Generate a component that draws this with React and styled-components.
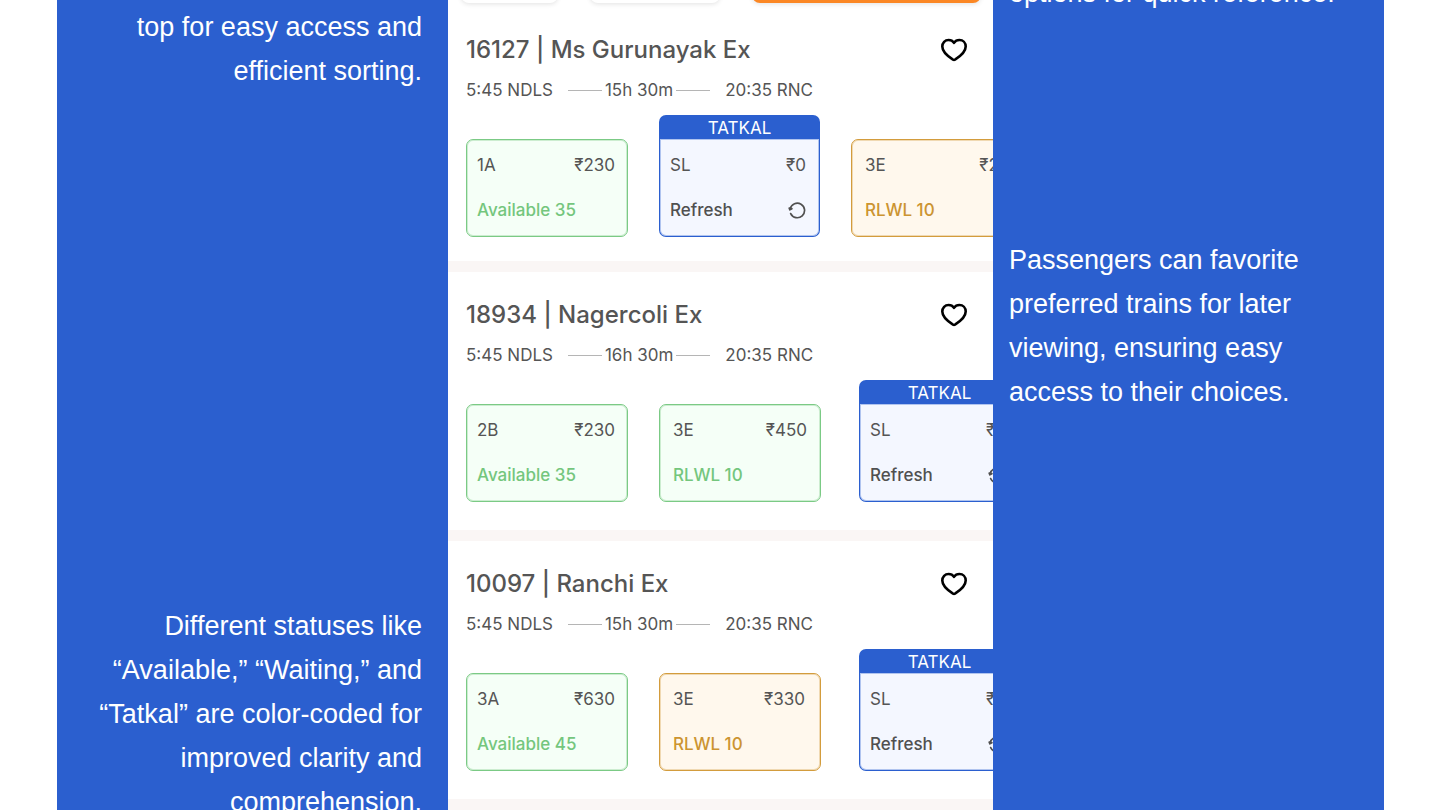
import React from 'react'
import styled, { createGlobalStyle } from 'styled-components'

const GlobalStyle = createGlobalStyle`
    * {
        box-sizing: border-box;
    }

    body {
        margin: 0;
        background-color: #fff;
        overflow: hidden;
    }
`

const Page = styled.main`
    display: grid;
    grid-template-columns: minmax(0, 391fr) minmax(0, 545fr) minmax(0, 391fr);
    height: 100vh;
    padding: 0 56px 0 57px;
    overflow: hidden;
`

const Notes = styled.aside`
    display: flex;
    flex-direction: column;
    gap: ${({ $gap }) => $gap}px;
    min-height: 0;
    padding: ${({ $right }) => ($right ? '0 16px' : '5px 26px 0')};
    background-color: #2b5fcf;
    color: #fff;
    font-family: 'Liberation Sans', Arial, sans-serif;
    font-size: 27px;
    line-height: 44px;
    text-align: ${({ $right }) => ($right ? 'left' : 'right')};
    white-space: nowrap;
`

const Note = styled.p`
    margin: ${({ $cut }) => ($cut ? '-29px 0 0' : '0')};
`

const Screen = styled.section`
    min-width: 0;
    overflow: hidden;
    background-color: #fff;
    color: #555;
    font-family: Inter, sans-serif;
    font-size: 17px;
    line-height: 20px;
`

const Filters = styled.div`
    display: flex;
    gap: 32px;
    margin-top: -41px;
    padding: 0 13px 4px;
`

const Filter = styled.button`
    flex: none;
    width: ${({ $width }) => $width}px;
    height: 44px;
    border: 0;
    border-radius: 8px;
    background-color: ${({ $active }) => ($active ? '#fb8724' : '#fff')};
    box-shadow: 0 1px 5px rgba(0, 0, 0, 0.12);
`

const Train = styled.article`
    padding: ${({ $first }) => ($first ? '28px 0 24px 18px' : '28px 0 28px 18px')};
    border-bottom: 11px solid #faf6f5;
`

const TrainHead = styled.header`
    display: flex;
    align-items: center;
    justify-content: space-between;
    height: 30px;
    padding-right: 25px;
`

const Title = styled.h2`
    margin: 0;
    font-size: 24px;
    line-height: 30px;
    font-weight: 500;
    white-space: nowrap;
`

const IconButton = styled.button`
    display: flex;
    padding: 0;
    border: 0;
    background: none;
    color: ${({ $color }) => $color};
    cursor: pointer;
`

const Times = styled.div`
    display: flex;
    align-items: center;
    gap: 15px;
    margin: 15px 0;
    white-space: nowrap;
`

const Duration = styled.span`
    display: flex;
    align-items: center;
    gap: 3px;

    &::before,
    &::after {
        content: '';
        width: 34px;
        height: 1px;
        background-color: #b5b5b5;
    }
`

const Fares = styled.div`
    display: flex;
    align-items: flex-end;
    gap: 31px;
    height: 122px;
`

const tones = {
    green: { line: '#7bca85', fill: '#f5fff7', text: '#74c67d' },
    orange: { line: '#d39c3d', fill: '#fff8ed', text: '#cc9431' },
    blue: { line: '#2b5fcf', fill: '#f4f7ff', text: '#505050' },
}

const Fare = styled.div`
    flex: none;
    width: ${({ $width }) => $width}px;
    margin-left: ${({ $spaced }) => ($spaced ? 7 : 0)}px;
`

const Tatkal = styled.div`
    height: 24px;
    padding-top: 3px;
    border-radius: 7px 7px 0 0;
    background-color: #2b5fcf;
    color: #fff;
    text-align: center;
`

const FareBody = styled.div`
    display: flex;
    flex-direction: column;
    gap: 25px;
    height: 98px;
    padding: ${({ $tatkal }) => ($tatkal ? 16 : 15)}px ${({ $right }) => $right}px 0 ${({ $left }) => $left}px;
    border: 1px solid ${({ $tone }) => tones[$tone].line};
    border-top-width: ${({ $tatkal }) => ($tatkal ? 0 : 1)}px;
    border-radius: ${({ $tatkal }) => ($tatkal ? '0 0 7px 7px' : '7px')};
    background-color: ${({ $tone }) => tones[$tone].fill};
    box-shadow: inset 0 0 0 1px ${({ $tone }) => tones[$tone].line}55;
`

const FareRow = styled.div`
    display: flex;
    align-items: center;
    justify-content: space-between;
    height: 20px;
`

const Status = styled.span`
    color: ${({ $tone }) => tones[$tone].text};
    font-weight: 500;
`

const trains = [
    {
        name: '16127 | Ms Gurunayak Ex',
        duration: '15h 30m',
        fares: [
            { cls: '1A', price: '₹230', status: 'Available 35', tone: 'green', left: 10, right: 12 },
            { cls: 'SL', price: '₹0', status: 'Refresh', tone: 'blue', tatkal: true },
            { cls: '3E', price: '₹230', status: 'RLWL 10', tone: 'orange', width: 183 },
        ],
    },
    {
        name: '18934 | Nagercoli Ex',
        duration: '16h 30m',
        fares: [
            { cls: '2B', price: '₹230', status: 'Available 35', tone: 'green', left: 10, right: 12 },
            { cls: '3E', price: '₹450', status: 'RLWL 10', tone: 'green' },
            { cls: 'SL', price: '₹0', status: 'Refresh', tone: 'blue', tatkal: true, spaced: true },
        ],
    },
    {
        name: '10097 | Ranchi Ex',
        duration: '15h 30m',
        fares: [
            { cls: '3A', price: '₹630', status: 'Available 45', tone: 'green', left: 10, right: 12 },
            { cls: '3E', price: '₹330', status: 'RLWL 10', tone: 'orange', right: 15 },
            { cls: 'SL', price: '₹0', status: 'Refresh', tone: 'blue', tatkal: true, spaced: true },
        ],
    },
]

function HeartIcon() {
    return (
        <svg width="28" height="26" viewBox="0 0 28 26" fill="none" stroke="currentColor" strokeWidth="2.6" strokeLinejoin="round">
            <path d="M14 5.8C12.7 3.8 10.8 3 8.6 3C5 3 2.3 5.8 2.3 9.6C2.3 15.2 8.4 19.8 13 22.7Q14 23.2 15 22.7C19.6 19.8 25.7 15.2 25.7 9.6C25.7 5.8 23 3 19.4 3C17.2 3 15.3 3.8 14 5.8Z" />
        </svg>
    )
}

function RefreshIcon() {
    return (
        <svg width="18" height="18" viewBox="0 0 18 18" fill="none" stroke="currentColor" strokeWidth="1.7" strokeLinecap="round" strokeLinejoin="round">
            <path d="M2.2 7.6A7.3 7.3 0 1 1 2.7 12.6" />
            <path d="M1.2 7.2L1.9 8.8L3.9 7.7Z" fill="currentColor" />
        </svg>
    )
}

function FareCard({ cls, price, status, tone, tatkal, spaced, width = 162, left = 13, right = 13 }) {
    return (
        <Fare $width={tatkal ? 161 : width} $spaced={spaced}>
            {tatkal && <Tatkal>TATKAL</Tatkal>}
            <FareBody $tone={tone} $tatkal={tatkal} $left={tatkal ? 10 : left} $right={right}>
                <FareRow>
                    <span>{cls}</span>
                    <span>{price}</span>
                </FareRow>
                <FareRow>
                    <Status $tone={tone}>{status}</Status>
                    {tatkal && (
                        <IconButton type="button" $color="#505050" aria-label="Refresh">
                            <RefreshIcon />
                        </IconButton>
                    )}
                </FareRow>
            </FareBody>
        </Fare>
    )
}

export default function App() {
    return (
        <>
            <GlobalStyle />
            <Page>
                <Notes $gap={511}>
                    <Note>
                        top for easy access and<br />
                        efficient sorting.
                    </Note>
                    <Note>
                        Different statuses like<br />
                        “Available,” “Waiting,” and<br />
                        “Tatkal” are color-coded for<br />
                        improved clarity and<br />
                        comprehension.
                    </Note>
                </Notes>

                <Screen>
                    <Filters>
                        <Filter type="button" $width={97} />
                        <Filter type="button" $width={130} />
                        <Filter type="button" $width={229} $active />
                    </Filters>
                    {trains.map((train, i) => (
                        <Train key={train.name} $first={i === 0}>
                            <TrainHead>
                                <Title>{train.name}</Title>
                                <IconButton type="button" $color="#000" aria-label="Favorite">
                                    <HeartIcon />
                                </IconButton>
                            </TrainHead>
                            <Times>
                                <span>5:45 NDLS</span>
                                <Duration>{train.duration}</Duration>
                                <span>20:35 RNC</span>
                            </Times>
                            <Fares>
                                {train.fares.map((fare) => (
                                    <FareCard key={fare.cls} {...fare} />
                                ))}
                            </Fares>
                        </Train>
                    ))}
                </Screen>

                <Notes $gap={223} $right>
                    <Note $cut>options for quick reference.</Note>
                    <Note>
                        Passengers can favorite<br />
                        preferred trains for later<br />
                        viewing, ensuring easy<br />
                        access to their choices.
                    </Note>
                </Notes>
            </Page>
        </>
    )
}
